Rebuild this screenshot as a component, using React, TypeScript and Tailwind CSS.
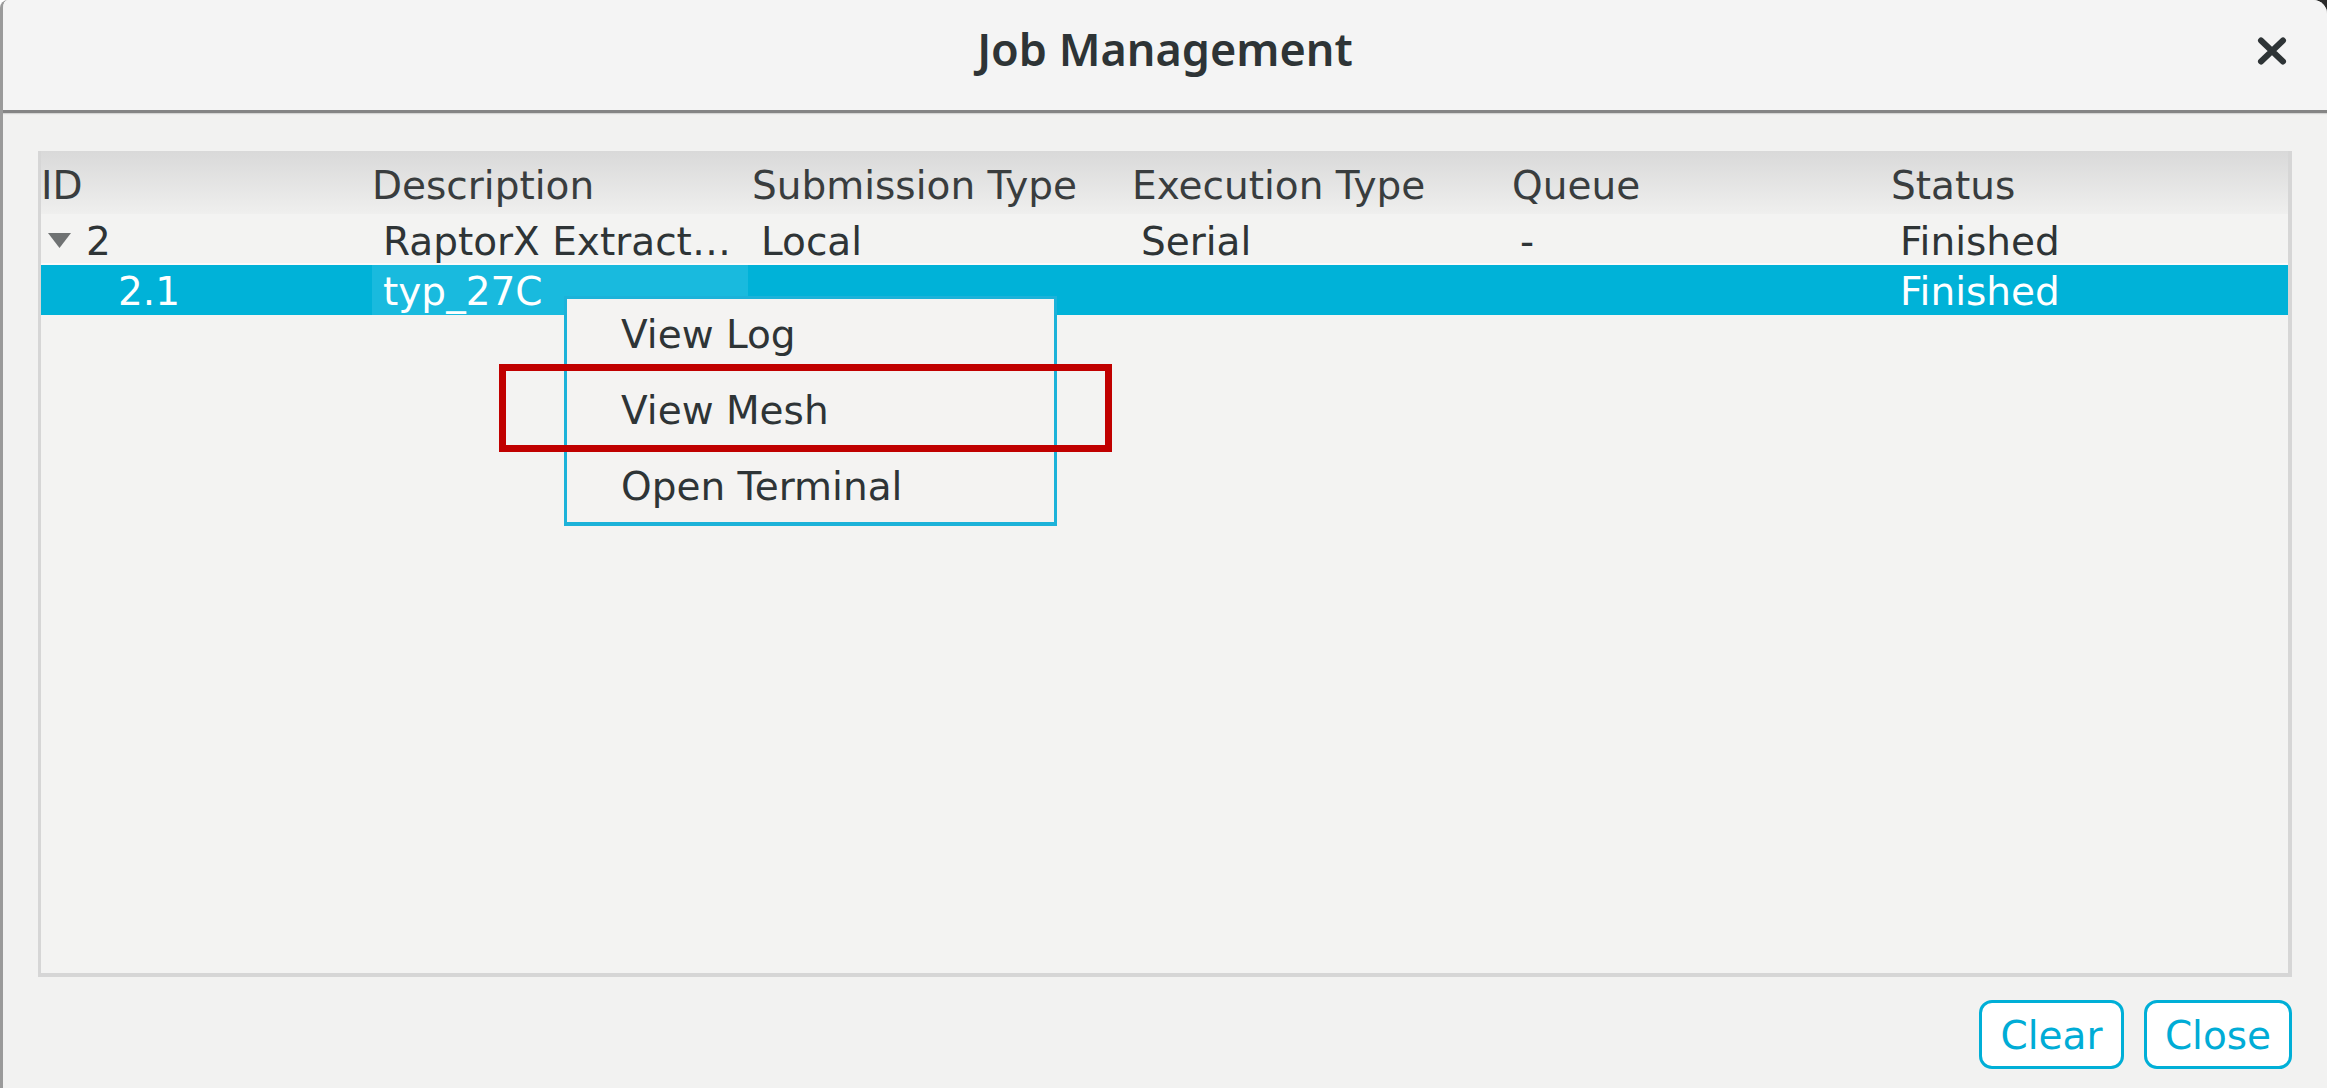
import React from "react";

const body = { fontFamily: '"DejaVu Sans", "Liberation Sans", sans-serif' };

function HeaderCell({ w, children }: { w: string; children: React.ReactNode }) {
  return <div className={`${w} shrink-0 whitespace-nowrap`}>{children}</div>;
}

export default function App() {
  return (
    <div className="relative w-[2327px] h-[1088px] bg-white overflow-hidden" style={body}>
      <div className="absolute right-0 top-0 w-[16px] h-[16px] bg-[#2a2a2a]" />
      <div className="relative z-10 flex flex-col w-full h-full bg-[#f2f2f1] rounded-tl-[8px] rounded-tr-[14px] border-l-[3px] border-[#9a9a9a] overflow-hidden">
        {/* Title bar */}
        <div className="grid grid-cols-[1fr_auto_1fr] h-[113px] shrink-0 bg-[#f4f4f4] border-b-[3px] border-[#858585] shadow-[0_1px_1px_rgba(0,0,0,0.12)]">
          <div />
          <div
            className="pt-[26px] text-[45px] leading-none font-semibold text-[#2e3436] whitespace-nowrap"
            style={{ fontFamily: '"Noto Sans", "DejaVu Sans", sans-serif' }}
          >
            Job Management
          </div>
          <div className="flex justify-end items-start pt-[37px] pr-[40px]">
            <svg width="30" height="28" viewBox="0 0 30 28">
              <path d="M4 3.5 L26 24.5 M26 3.5 L4 24.5" stroke="#2e3436" strokeWidth="6" strokeLinecap="round" />
            </svg>
          </div>
        </div>

        {/* Content */}
        <div className="flex flex-col flex-1 px-[35px] pt-[38px] pb-[21px]">
          <div className="flex flex-col h-[826px] border-l-[3px] border-r-[4px] border-b-[4px] border-[#d6d6d6] text-[39px] leading-[45px] text-[#2e3436]">
            {/* header */}
            <div className="flex h-[63px] pt-[12px] bg-gradient-to-b from-[#d9d9d9] to-[#efefee] text-[#393d3e]">
              <HeaderCell w="w-[331px]">ID</HeaderCell>
              <HeaderCell w="w-[380px]">Description</HeaderCell>
              <HeaderCell w="w-[380px]">Submission Type</HeaderCell>
              <HeaderCell w="w-[380px]">Execution Type</HeaderCell>
              <HeaderCell w="w-[379px]">Queue</HeaderCell>
              <HeaderCell w="w-[380px]">Status</HeaderCell>
            </div>
            {/* row 1 */}
            <div className="flex h-[51px] border-b-[2px] border-[#fafafa] bg-[#f3f3f2]">
              <div className="w-[331px] shrink-0 flex items-start pt-[5px]">
                <svg width="23" height="15" viewBox="0 0 23 15" className="ml-[7px] mt-[14px]">
                  <polygon points="0,0 23,0 11.5,15" fill="#6f7273" />
                </svg>
                <span className="ml-[15px]">2</span>
              </div>
              <div className="w-[380px] shrink-0 pt-[5px] pl-[11px] whitespace-nowrap">RaptorX Extract…</div>
              <div className="w-[380px] shrink-0 pt-[5px] pl-[9px]">Local</div>
              <div className="w-[380px] shrink-0 pt-[5px] pl-[9px]">Serial</div>
              <div className="w-[379px] shrink-0 pt-[5px] pl-[8px]">-</div>
              <div className="w-[380px] shrink-0 pt-[5px] pl-[9px]">Finished</div>
            </div>
            {/* row 2 selected */}
            <div className="flex h-[50px] bg-[#00b2d8] text-white">
              <div className="w-[331px] shrink-0 pt-[4px] pl-[77px]">2.1</div>
              <div className="w-[380px] shrink-0">
                <div className="w-[376px] h-full bg-[#19bade] pt-[4px] pl-[11px]">typ_27C</div>
              </div>
              <div className="w-[380px] shrink-0" />
              <div className="w-[380px] shrink-0" />
              <div className="w-[379px] shrink-0" />
              <div className="w-[380px] shrink-0 pt-[4px] pl-[9px]">Finished</div>
            </div>
            <div className="flex-1 bg-[#f3f3f2]" />
          </div>

          <div className="flex justify-end gap-[20px] mt-[23px]">
            <button className="w-[145px] h-[69px] pt-[2px] rounded-[13px] border-[3px] border-[#00afd7] bg-white text-[39px] leading-[45px] text-[#00acd6]" style={body}>
              Clear
            </button>
            <button className="w-[148px] h-[69px] pt-[2px] rounded-[13px] border-[3px] border-[#00afd7] bg-white text-[39px] leading-[45px] text-[#00acd6]" style={body}>
              Close
            </button>
          </div>
        </div>
      </div>

      {/* Context menu */}
      <div className="absolute z-20 left-[564px] top-[296px] w-[493px] h-[230px] bg-[#f4f3f2] border-[3px] border-b-[4px] border-[#1cb2d9] pt-[13px] pl-[54px] flex flex-col gap-[31px] text-[39px] leading-[45px] text-[#2e3436]">
        <div>View Log</div>
        <div>View Mesh</div>
        <div>Open Terminal</div>
      </div>

      {/* Red highlight */}
      <div className="absolute z-30 left-[499px] top-[364px] w-[613px] h-[88px] border-[7px] border-[#c00000]" />
    </div>
  );
}
